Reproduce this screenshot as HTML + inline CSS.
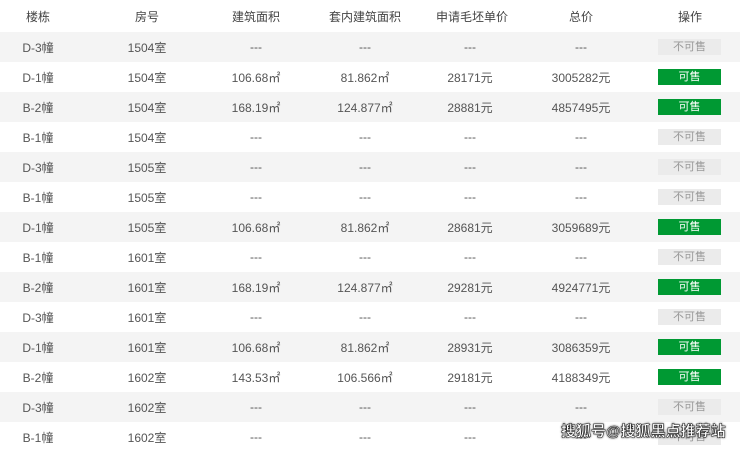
<!DOCTYPE html>
<html><head><meta charset="utf-8"><style>
body{margin:0;width:740px;height:448px;overflow:hidden;background:#fff;font-family:"Liberation Sans","Noto Sans CJK SC",sans-serif;font-size:12px;color:#555;position:relative}
table{border-collapse:collapse;width:740px;table-layout:fixed;position:absolute;left:0;top:0}
td{text-align:center;padding:0;height:30px;white-space:nowrap;overflow:visible}
td:last-child{text-align:left}
tr.h td:last-child{text-align:left;padding-left:20px}
tr.h td{height:32px;color:#444}
tr.g td{background:#f4f4f4}
.btn{display:inline-block;width:63px;height:16px;line-height:16px;font-size:11px;color:#fff;background:#009933;vertical-align:middle;text-align:center}
.no{background:#ebebeb;color:#999}
.wm{position:absolute;left:561px;top:422px;font-size:15px;line-height:20px;white-space:nowrap;font-weight:bold;color:#fff;-webkit-text-stroke:0.5px #222;text-shadow:0 0 2px #000}
</style></head><body>
<table>
<colgroup><col style="width:76px"><col style="width:142px"><col style="width:76px"><col style="width:142px"><col style="width:68px"><col style="width:154px"><col style="width:82px"></colgroup>
<tr class="h"><td>楼栋</td><td>房号</td><td>建筑面积</td><td>套内建筑面积</td><td>申请毛坯单价</td><td>总价</td><td>操作</td></tr>
<tr class="g"><td>D-3幢</td><td>1504室</td><td>---</td><td>---</td><td>---</td><td>---</td><td><span class="btn no">不可售</span></td></tr>
<tr><td>D-1幢</td><td>1504室</td><td>106.68㎡</td><td>81.862㎡</td><td>28171元</td><td>3005282元</td><td><span class="btn">可售</span></td></tr>
<tr class="g"><td>B-2幢</td><td>1504室</td><td>168.19㎡</td><td>124.877㎡</td><td>28881元</td><td>4857495元</td><td><span class="btn">可售</span></td></tr>
<tr><td>B-1幢</td><td>1504室</td><td>---</td><td>---</td><td>---</td><td>---</td><td><span class="btn no">不可售</span></td></tr>
<tr class="g"><td>D-3幢</td><td>1505室</td><td>---</td><td>---</td><td>---</td><td>---</td><td><span class="btn no">不可售</span></td></tr>
<tr><td>B-1幢</td><td>1505室</td><td>---</td><td>---</td><td>---</td><td>---</td><td><span class="btn no">不可售</span></td></tr>
<tr class="g"><td>D-1幢</td><td>1505室</td><td>106.68㎡</td><td>81.862㎡</td><td>28681元</td><td>3059689元</td><td><span class="btn">可售</span></td></tr>
<tr><td>B-1幢</td><td>1601室</td><td>---</td><td>---</td><td>---</td><td>---</td><td><span class="btn no">不可售</span></td></tr>
<tr class="g"><td>B-2幢</td><td>1601室</td><td>168.19㎡</td><td>124.877㎡</td><td>29281元</td><td>4924771元</td><td><span class="btn">可售</span></td></tr>
<tr><td>D-3幢</td><td>1601室</td><td>---</td><td>---</td><td>---</td><td>---</td><td><span class="btn no">不可售</span></td></tr>
<tr class="g"><td>D-1幢</td><td>1601室</td><td>106.68㎡</td><td>81.862㎡</td><td>28931元</td><td>3086359元</td><td><span class="btn">可售</span></td></tr>
<tr><td>B-2幢</td><td>1602室</td><td>143.53㎡</td><td>106.566㎡</td><td>29181元</td><td>4188349元</td><td><span class="btn">可售</span></td></tr>
<tr class="g"><td>D-3幢</td><td>1602室</td><td>---</td><td>---</td><td>---</td><td>---</td><td><span class="btn no">不可售</span></td></tr>
<tr><td>B-1幢</td><td>1602室</td><td>---</td><td>---</td><td>---</td><td>---</td><td><span class="btn no">不可售</span></td></tr>
</table>
<div class="wm">搜狐号@搜狐黑点推荐站</div>
</body></html>
